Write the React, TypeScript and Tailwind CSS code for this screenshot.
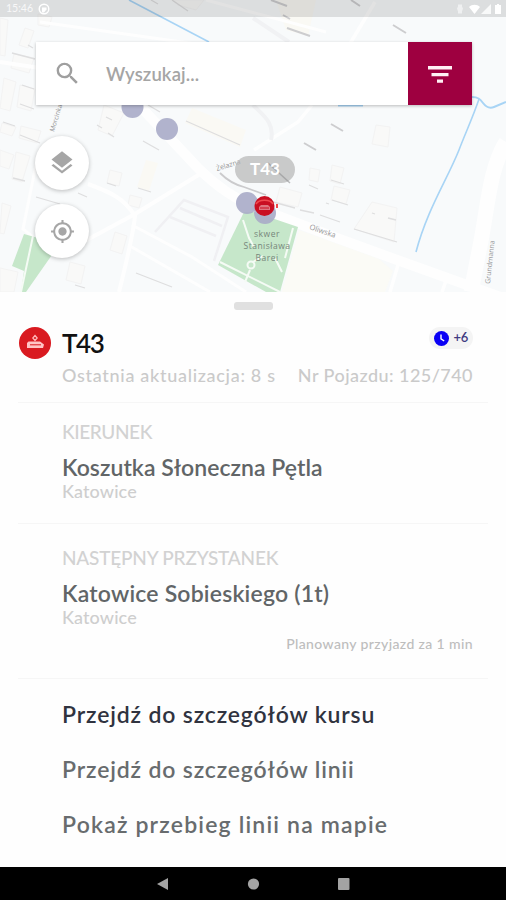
import React from 'react'
import clsx from 'clsx'
import { MdGpsFixed, MdLayers, MdSearch } from 'react-icons/md'

interface StopInfoProps {
  label: string
  labelClass: string
  name: string
  nameClass: string
  city: string
}

interface SheetAction {
  text: string
  className: string
}

const actions: SheetAction[] = [
  {
    text: 'Przejdź do szczegółów kursu',
    className: 'text-[#30333f] tracking-[0.84px]',
  },
  {
    text: 'Przejdź do szczegółów linii',
    className: 'text-[#686c6e] tracking-[0.84px]',
  },
  {
    text: 'Pokaż przebieg linii na mapie',
    className: 'text-[#686c6e] tracking-[1.18px]',
  },
]

const MapView = () => (
  <svg
    className="absolute inset-0"
    width="506"
    height="292"
    viewBox="0 0 506 292"
    fill="none">
    <rect width="506" height="292" fill="#f8fafb" />

    {/* buildings */}
    <g fill="#f9f9f8" stroke="#f3f3f3" strokeWidth="1">
      <path d="M0 18l8 2-3 36-5-1zM25 28l9 3-6 17-9-3zM38 14l14 3-3 10-11-2zM14 54l20 4-5 15-18-5z" />
      <path d="M4 78l12 4-6 29-10-3zM20 85l15 4-4 22-14-4zM2 123l14 4-4 9-12-4zM21 126l20 5-4 12-18-5z" />
      <path d="M0 150l14 5-5 14-9-3zM16 152l14 4-8 26-10-3zM2 203l9 3-7 28-4-1zM0 268l18 4-4 20H0z" />
      <path d="M104 105l20 8-12 23-14-6zM110 170l12 3-3 13-12-3zM130 195l12 3-3 10-11-3z" />
      <path d="M70 262l15 4-4 18-15-4zM115 232l12 4-5 18-12-4z" />
      <path d="M376 125l14 2-2 20-16-3z" />
      <path d="M332 165l12 3-4 16-10-3zM310 168l10 2-2 12-9-2zM280 187l22 6-4 14-22-5zM334 186l16 4-4 14-15-4z" />
      <path d="M372 202l25 6-3 34-40-13z" />
      <path d="M172 0h32l-8 10-18-5z" />
    </g>
    <g fill="#faf9f4">
      <path d="M146 160l12 3-9 28-12-4zM192 108l54 22-6 17-55-24zM276 0l40 0-8 36-22-6z" />
    </g>
    <path d="M299 230l80 29 14 12-8 21H282z" fill="#fbfbf6" />

    {/* streets */}
    <g stroke="#fefefe">
      <path d="M138 104l60 64c18 18 40 33 62 41l74 28 66 24 106 38" strokeWidth="10" />
      <path d="M506 142c-16 26-18 62-25 99l-10 51" strokeWidth="15" />
      <path d="M0 62l40 6M200 174l-65 40-50 27M88 184c22 8 36 14 47 32-2 20-8 44-16 76" strokeWidth="4" />
      <path d="M132 225l60 32 54 35M130 246l80 46M38 155l-15 74 10 8" strokeWidth="3" />
      <path d="M375 2l-30 50M312 105l-14 17-44 28M398 265l-8 27M448 275l-6 17" strokeWidth="3.5" />
      <path d="M206 0l120 32M40 22l170 24" strokeWidth="3" />
    </g>

    {/* parks */}
    <path d="M244 212l10 0 44 15-18 65h-14l-48-27z" fill="#c6e7ca" />
    <path d="M24 234l28 8 2 10-28 40h-5l3-21-12-5z" fill="#c6e7ca" />
    <path
      d="M33 236l-12 56M243 220l6 18 5 9M293 228l-8 30M220 262l60 30M245 282l5-12M275 258l7 14M253 262l10-6"
      stroke="#f5fbf5"
      strokeWidth="2"
    />
    <circle cx="251" cy="265" r="3.500" stroke="#f5fbf5" strokeWidth="2" />

    {/* parking lanes */}
    <path
      d="M155 232l29-32 44 17-14 44M180 208l42 18M170 217l46 19"
      stroke="#f0f0f3"
      strokeWidth="2.5"
    />
    <path d="M253 18l36 24M253 105c10 10 22 18 18 35" stroke="#f1f2f4" strokeWidth="4" />

    {/* building shadows */}
    <g stroke="#dededf" strokeWidth="1.3">
      <path d="M271 0l16 6M283 15l7 4M287 28l23 8M351 0l9 6M393 25l13 8M331 124l12 7M304 143l12 7" stroke="#cdcdcf" strokeWidth="2" />
      <path d="M12 53l23 6M28 45l5 3M22 85l12 4M20 104l14 5M3 122l12 4M20 135l20 8M13 178l12 3M36 197l24 7M78 193l9 4" />
      <path d="M148 105l12 7M106 117l6 3M97 125l5 3M108 133l6 4M143 141l16 9M186 121l54 24M151 0l7 4M172 0l16 11" />
      <path d="M136 273l36 14M107 183l9 3M138 188l13 4M273 202l22 6M300 210l14 3M320 215l20 7M331 180l13 4M332 200l16 5M354 229l43 13" />
      <path d="M372 213l3 1M388 218l8 2M309 185l9 4M326 203l3 1M75 285l10 3" />
    </g>
    <path d="M220 173c8 8 16 12 24 14l22 8" stroke="#cbcbcd" strokeWidth="1.8" />

    {/* water */}
    <g stroke="#a8d4f5" strokeWidth="1.6">
      <path d="M129 0l80 42" />
      <path d="M472 97c6 0 8 2 11 6s6 6 11 4l12-5" strokeWidth="2" />
      <path d="M479 99c-6 18-14 35-20 51-12 30-32 60-43 102" />
      <path d="M338 105.500h25" strokeWidth="2" />
    </g>

    {/* street names */}
    <g fill="#959597" fontFamily="Open Sans, sans-serif" fontSize="7.5">
      <text transform="translate(54 132) rotate(-73)" fontSize="6.5">Morcinka</text>
      <text transform="translate(217 171) rotate(-17)" fontSize="7">Żelazna</text>
      <text transform="translate(309 229) rotate(19)">Oliwska</text>
      <text transform="translate(490 284) rotate(-84)" fontSize="7">Grundmanna</text>
      <g textAnchor="middle" fill="#76867a" fontSize="8.500" letterSpacing="0.5">
        <text x="267" y="237">skwer</text>
        <text x="267" y="249">Stanisława</text>
        <text x="267" y="261">Barei</text>
      </g>
    </g>

    {/* stops */}
    <g fill="#a9abc8" fillOpacity="0.9">
      <circle cx="132.500" cy="107" r="11" />
      <circle cx="167" cy="129" r="11" />
      <circle cx="247" cy="203" r="11" />
      <circle cx="265" cy="213" r="11" />
    </g>

    {/* vehicle marker */}
    <rect x="235" y="156" width="60" height="27" rx="13.500" fill="#b9b9b9" fillOpacity="0.75" />
    <path d="M268 163l22 20" stroke="#8f8f91" strokeWidth="1.500" opacity="0.6" />
    <text
      x="265"
      y="175"
      textAnchor="middle"
      fill="#fff"
      fontFamily="Lato, sans-serif"
      fontWeight="700"
      fontSize="17">
      T43
    </text>
    <circle cx="264.500" cy="206" r="10" fill="#c90f22" />
    <path d="M256 204c3-5 14-5 17 0" stroke="#f04a50" strokeWidth="1.500" />
    <path d="M259 210v-3l2-2h7l2 2v3z" fill="#df7680" />
    <path d="M260 208h9" stroke="#c90f22" />
    <rect x="276" y="204" width="2" height="4" fill="#ef4a4a" />
  </svg>
)

const StatusBar = () => (
  <div className="relative flex h-[17px] items-center justify-between bg-black/[0.11] pr-[3px] pl-[6px] text-white">
    <div className="flex items-center gap-[5px]">
      <span className="text-[10.500px] leading-none opacity-80">15:46</span>
      <svg width="12" height="12" viewBox="0 0 12 12">
        <circle cx="6" cy="6" r="4.800" fill="none" stroke="#fff" strokeWidth="1.400" />
        <path d="M4 4.500h4.500v2L6 9.500H4z" fill="#fff" />
      </svg>
    </div>
    <svg width="48" height="12" viewBox="0 0 48 12" fill="#fff">
      <path d="M3 1.500h4v2l1 2-1 3v2H3v-2l-1-3 1-2z" opacity="0.55" />
      <path d="M14 4c3-3 8-3 11 0l-5.500 7z" />
      <path d="M36 1v10h-10z" opacity="0.8" />
      <path d="M40 2h2V1h2v1h2v9h-6z" />
    </svg>
  </div>
)

const SearchBar = () => (
  <div className="relative mt-[25px] mr-[34px] ml-[36px] flex h-[63px] bg-white shadow-[0_1px_3px_rgba(0,0,0,0.25)]">
    <div className="flex flex-1 items-center pl-[17px]">
      <MdSearch className="size-[29px] text-[#9f9f9f]" />
      <span className="mt-[2px] ml-[24px] text-[18.500px] font-semibold tracking-[0.1px] text-[#a5a5a5]">
        Wyszukaj...
      </span>
    </div>
    <button
      type="button"
      className="flex w-[64px] items-center justify-center bg-[#9e0040]">
      <svg width="26" height="18" viewBox="0 0 26 18" fill="#fff0f4">
        <path d="M1 1h24v3.500H1zM4.500 8h17v3.200h-17zM10 14.500h6v3.200h-6z" />
      </svg>
    </button>
  </div>
)

const RoundButton = ({ children }: { children: React.ReactNode }) => (
  <button
    type="button"
    className="flex size-[54px] items-center justify-center rounded-full bg-white text-[#a6a6a6] shadow-[0_1px_4px_rgba(0,0,0,0.25)]">
    {children}
  </button>
)

const VehicleIcon = () => (
  <svg width="32" height="32" viewBox="0 0 32 32">
    <circle cx="16" cy="16" r="16" fill="#d91a20" />
    <path d="M16 8.500l2.200 2.500-2.200 2.500-2.200-2.500z" fill="none" stroke="#ffb9b9" strokeWidth="1.200" />
    <path d="M9.500 14.500H21l4 3-1 3.500H8v-5z" fill="#ffc4c4" />
    <path d="M11 17.800h11" stroke="#d91a20" strokeWidth="1" />
  </svg>
)

const StopInfo: React.FC<StopInfoProps> = ({
  label,
  labelClass,
  name,
  nameClass,
  city,
}) => (
  <div className="pl-[62px]">
    <div
      className={clsx(
        'text-[19px] leading-[24px] font-medium text-[#d2d2d2]',
        labelClass,
      )}>
      {label}
    </div>
    <div
      className={clsx(
        'mt-[9px] text-[23px] leading-[28px] font-semibold text-[#616567]',
        nameClass,
      )}>
      {name}
    </div>
    <div className="text-[18px] leading-[20px] font-medium tracking-[0.1px] text-[#cecece]">
      {city}
    </div>
  </div>
)

const Divider = () => <div className="mx-[18px] h-px bg-[#f6f6f6]" />

const NavigationBar = () => (
  <div className="flex h-[33px] items-center justify-center bg-black">
    <svg width="194" height="14" viewBox="0 0 194 14" fill="#a3a3a3">
      <path d="M1 7L12 1v12z" />
      <circle cx="97.500" cy="7" r="5.600" />
      <rect x="182" y="1" width="11.500" height="12" rx="1" />
    </svg>
  </div>
)

const App = () => {
  return (
    <div className="flex h-[900px] w-[506px] flex-col overflow-hidden bg-[#fefefe] font-['Lato',sans-serif] whitespace-nowrap">
      <div className="relative h-[292px] shrink-0 overflow-hidden">
        <MapView />
        <StatusBar />
        <SearchBar />
        <div className="relative mt-[31px] ml-[35px] flex flex-col gap-[14px]">
          <RoundButton>
            <MdLayers className="size-[28px]" />
          </RoundButton>
          <RoundButton>
            <MdGpsFixed className="size-[25px]" />
          </RoundButton>
        </div>
      </div>

      <div className="flex flex-1 flex-col">
        <div className="mx-auto mt-[10px] h-[8px] w-[39px] rounded-[3px] bg-[#e0e0e0]" />
        <div className="mt-[15px] flex h-[36px] items-center pr-[33px] pl-[19px]">
          <VehicleIcon />
          <span className="ml-[11px] text-[26px] leading-none font-semibold tracking-[-1.4px] text-[#111]">
            T43
          </span>
          <div className="mb-[10px] ml-auto flex h-[22px] items-center gap-[5px] rounded-full bg-[#f4f4f4] px-[5px]">
            <svg width="15" height="15" viewBox="0 0 15 15">
              <circle cx="7.500" cy="7.500" r="7.500" fill="#0a00f5" />
              <path d="M7 3.500v4.300l3.200 2.200" fill="none" stroke="#fff" strokeWidth="1.400" />
            </svg>
            <span className="text-[13px] font-semibold tracking-[-0.3px] text-[#3f3a80]">
              +6
            </span>
          </div>
        </div>
        <div className="mt-[1px] flex justify-between pr-[33px] pl-[62px] text-[18px] leading-[26px] font-medium text-[#cacaca]">
          <span className="tracking-[0.7px]">Ostatnia aktualizacja: 8 s</span>
          <span className="tracking-[0.45px]">Nr Pojazdu: 125/740</span>
        </div>
        <div className="mt-[14px]">
          <Divider />
        </div>
        <div className="mt-[17px] h-[103px]">
          <StopInfo
            label="KIERUNEK"
            labelClass="tracking-[-0.4px]"
            name="Koszutka Słoneczna Pętla"
            nameClass="tracking-[0.04px]"
            city="Katowice"
          />
        </div>
        <Divider />
        <div className="mt-[22px] h-[132px]">
          <StopInfo
            label="NASTĘPNY PRZYSTANEK"
            labelClass="tracking-[-0.2px]"
            name="Katowice Sobieskiego (1t)"
            nameClass="tracking-[0.2px]"
            city="Katowice"
          />
          <div className="mt-[7px] pr-[33px] text-right text-[14px] leading-[20px] font-medium tracking-[0.38px] text-[#bdbdbd]">
            Planowany przyjazd za 1 min
          </div>
        </div>
        <Divider />
        <div className="mt-[8px] flex flex-col pl-[62px]">
          {actions.map((action) => (
            <button
              type="button"
              key={action.text}
              className={clsx(
                'h-[55px] text-left text-[23px] font-semibold',
                action.className,
              )}>
              {action.text}
            </button>
          ))}
        </div>
      </div>

      <NavigationBar />
    </div>
  )
}

export default App
